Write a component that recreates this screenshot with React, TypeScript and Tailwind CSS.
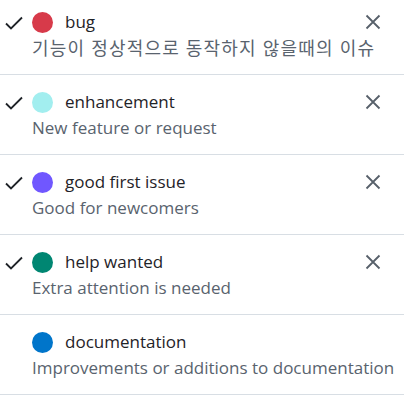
import React from "react";

type Label = { name: string; color: string; desc: string; checked: boolean; ko?: boolean };

const labels: Label[] = [
  { name: "bug", color: "#d73a4a", desc: "기능이 정상적으로 동작하지 않을때의 이슈", checked: true, ko: true },
  { name: "enhancement", color: "#a2eeef", desc: "New feature or request", checked: true },
  { name: "good first issue", color: "#7057ff", desc: "Good for newcomers", checked: true },
  { name: "help wanted", color: "#008672", desc: "Extra attention is needed", checked: true },
  { name: "documentation", color: "#0075ca", desc: "Improvements or additions to documentation", checked: false },
];

function Check() {
  return (
    <svg width="18" height="14" viewBox="0 0 18 14" fill="none">
      <path d="M1 7.5 L6 12.5 L17 1.5" stroke="#1f2328" strokeWidth="1.8" />
    </svg>
  );
}

function Close() {
  return (
    <svg width="16" height="16" viewBox="0 0 16 16" fill="none">
      <path d="M1.5 1.5 L14.5 14.5 M14.5 1.5 L1.5 14.5" stroke="#57606a" strokeWidth="1.8" />
    </svg>
  );
}

export default function App() {
  return (
    <div
      className="w-[404px] h-[400px] overflow-hidden bg-white"
      style={{ fontFamily: '"Open Sans", "Noto Sans CJK KR", sans-serif' }}
    >
      <div className="-mt-[5px]">
        {labels.map((l) => (
          <div key={l.name} className="flex border-b border-[#d8dee4] pt-[16px] pb-[15px]">
            <div className="w-[32px] shrink-0 flex justify-start pl-[5px] pt-[5px]">
              {l.checked && <Check />}
            </div>
            <div className="flex-1 min-w-0">
              <div className="flex items-center h-[22px]">
                <span className="w-[21px] h-[21px] rounded-full shrink-0" style={{ backgroundColor: l.color }} />
                <span className="ml-[12px] text-[17px] leading-[22px] text-[#1f2328]">{l.name}</span>
                <span className="ml-auto mr-[23px]">
                  {l.checked && <Close />}
                </span>
              </div>
              {l.ko ? (
                <div className="mt-[4px] text-[18px] leading-[22px] tracking-[1.2px] text-[#59636e] whitespace-nowrap">
                  {l.desc}
                </div>
              ) : (
                <div className="mt-[4px] text-[17px] leading-[22px] text-[#59636e] whitespace-nowrap">{l.desc}</div>
              )}
            </div>
          </div>
        ))}
      </div>
    </div>
  );
}
